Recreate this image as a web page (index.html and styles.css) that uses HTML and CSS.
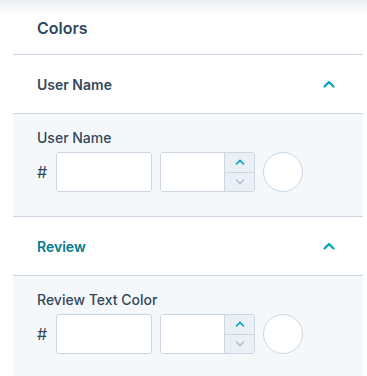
FILE: index.html
```html
<!DOCTYPE html>
<html lang="en">
<head>
    <meta charset="UTF-8">
    <meta name="viewport" content="width=device-width, initial-scale=1.0">
    <title>Colors</title>
    <link rel="stylesheet" href="styles.css">
</head>
<body>
    <div class="panel">
        <div class="panel-title">Colors</div>

        <section class="group">
            <div class="group-header">
                <span>User Name</span>
                <svg class="chevron" width="12" height="8" viewBox="0 0 12 8"><path d="M1.5 6.5 L6 2 L10.5 6.5" fill="none" stroke="currentColor" stroke-width="2.2" stroke-linecap="round" stroke-linejoin="round"/></svg>
            </div>
            <div class="group-body">
                <label class="field-label">User Name</label>
                <div class="color-row">
                    <span class="hash">#</span>
                    <input type="text" class="hex-input">
                    <div class="number-input">
                        <input type="text">
                        <div class="steppers">
                            <button class="step step-up"><svg width="10" height="6" viewBox="0 0 10 6"><path d="M1.5 5 L5 1.5 L8.5 5" fill="none" stroke="currentColor" stroke-width="1.6" stroke-linecap="round"/></svg></button>
                            <button class="step step-down"><svg width="10" height="6" viewBox="0 0 10 6"><path d="M1.5 1 L5 4.5 L8.5 1" fill="none" stroke="currentColor" stroke-width="1.6" stroke-linecap="round"/></svg></button>
                        </div>
                    </div>
                    <div class="swatch"></div>
                </div>
            </div>
        </section>

        <section class="group">
            <div class="group-header active">
                <span>Review</span>
                <svg class="chevron" width="12" height="8" viewBox="0 0 12 8"><path d="M1.5 6.5 L6 2 L10.5 6.5" fill="none" stroke="currentColor" stroke-width="2.2" stroke-linecap="round" stroke-linejoin="round"/></svg>
            </div>
            <div class="group-body">
                <label class="field-label">Review Text Color</label>
                <div class="color-row">
                    <span class="hash">#</span>
                    <input type="text" class="hex-input">
                    <div class="number-input">
                        <input type="text">
                        <div class="steppers">
                            <button class="step step-up"><svg width="10" height="6" viewBox="0 0 10 6"><path d="M1.5 5 L5 1.5 L8.5 5" fill="none" stroke="currentColor" stroke-width="1.6" stroke-linecap="round"/></svg></button>
                            <button class="step step-down"><svg width="10" height="6" viewBox="0 0 10 6"><path d="M1.5 1 L5 4.5 L8.5 1" fill="none" stroke="currentColor" stroke-width="1.6" stroke-linecap="round"/></svg></button>
                        </div>
                    </div>
                    <div class="swatch"></div>
                </div>
            </div>
        </section>
    </div>
</body>
</html>
```

FILE: styles.css
```css
body {
    font-family: Inter, 'Noto Sans', sans-serif;
    margin: 0;
    padding: 0;
    background: linear-gradient(#eaeef3, #ffffff 14px);
    color: #33475b;
    height: 376px;
    overflow: hidden;
}
.panel {
    margin: 0 4px 0 13px;
}
.panel-title {
    height: 55px;
    box-sizing: border-box;
    padding: 18px 0 0 24px;
    font-size: 16px;
    font-weight: 600;
    border-bottom: 1px solid #cbd6e2;
}
.group-header {
    height: 59px;
    box-sizing: border-box;
    display: flex;
    align-items: center;
    justify-content: space-between;
    padding: 0 28px 0 24px;
    font-size: 14px;
    font-weight: 600;
    border-bottom: 1px solid #cbd6e2;
    background: #fff;
}
.group-header.active {
    color: #007a8c;
}
.chevron {
    color: #00a4bd;
}
.group-body {
    background: #f5f8fa;
    padding: 14px 24px 24px;
    border-bottom: 1px solid #cbd6e2;
}
.field-label {
    display: block;
    font-size: 14px;
    font-weight: 500;
    line-height: 20px;
    margin-bottom: 4px;
}
.color-row {
    display: flex;
    align-items: center;
    gap: 8px;
}
.hash {
    font-size: 16px;
    width: 11px;
}
input {
    font-family: inherit;
    box-sizing: border-box;
    border: 1px solid #cbd6e2;
    border-radius: 3px;
    background: #fff;
    height: 40px;
    margin: 0;
    outline: none;
}
.hex-input {
    width: 96px;
}
.number-input {
    display: flex;
    width: 95px;
    height: 40px;
    box-sizing: border-box;
    border: 1px solid #cbd6e2;
    border-radius: 3px;
    overflow: hidden;
    background: #fff;
}
.number-input input {
    border: none;
    border-radius: 0;
    height: 38px;
    width: 63px;
}
.steppers {
    display: flex;
    flex-direction: column;
    width: 31px;
    border-left: 1px solid #cbd6e2;
    background: #eaf0f6;
}
.step {
    flex: 1;
    border: none;
    background: none;
    padding: 0;
    display: flex;
    align-items: center;
    justify-content: center;
}
.step-up {
    color: #00a4bd;
    border-bottom: 1px solid #cbd6e2;
}
.step-down {
    color: #b0c1d4;
}
.swatch {
    width: 38px;
    height: 38px;
    border-radius: 50%;
    border: 1px solid #cbd6e2;
    background: #fff;
}
```
